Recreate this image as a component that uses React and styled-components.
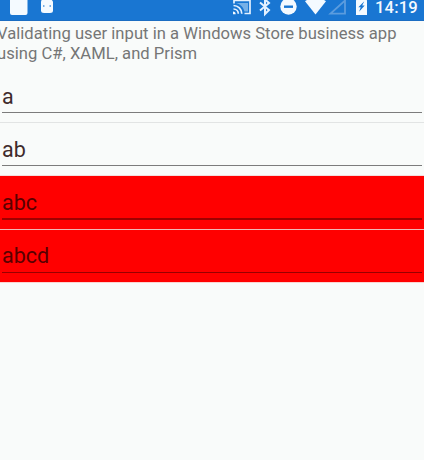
import React from 'react';
import styled, { createGlobalStyle } from 'styled-components';

const GlobalStyle = createGlobalStyle`
  * { box-sizing: border-box; }
  html, body { margin: 0; padding: 0; overflow: hidden; background: #f9fbfa; }
`;

const Screen = styled.main`
  width: 424px;
  height: 460px;
  overflow: hidden;
  background: #f9fbfa;
  font-family: Roboto, sans-serif;
`;

const StatusBar = styled.header`
  display: flex;
  height: 21px;
  background: #1976d2;
  border-bottom: 1px solid #1b6dc2;
`;

const StatusIcons = styled.svg`
  display: block;
  flex: none;
  width: 374px;
  height: 20px;
`;

const Clock = styled.time`
  margin-left: 1px;
  font-size: 16.6px;
  font-weight: 500;
  line-height: 15px;
  letter-spacing: 0.15px;
  color: #f4f9ff;
`;

const Description = styled.p`
  margin: 0 0 0 -3px;
  padding-top: 3px;
  height: 49px;
  font-size: 16.6px;
  line-height: 19.5px;
  letter-spacing: 0.02px;
  color: #757676;
  white-space: pre-line;
`;

const List = styled.section`
  display: flex;
  flex-direction: column;
`;

const Row = styled.label`
  display: block;
  height: ${({ $height }) => $height}px;
  padding: ${({ $top }) => $top}px 2px 0;
  background: ${({ $invalid }) => ($invalid ? '#ff0000' : 'transparent')};
  border-bottom: 1px solid ${({ $divider }) => $divider};
`;

const Entry = styled.input`
  display: block;
  width: 100%;
  height: ${({ $line, $gap }) => 25 + $gap + $line}px;
  padding: 0 0 ${({ $gap }) => $gap}px;
  border: 0;
  border-bottom: ${({ $line }) => $line}px solid ${({ $lineColor }) => $lineColor};
  border-radius: 0;
  outline: 0;
  background: transparent;
  font: 400 21.5px/25px Roboto, sans-serif;
  color: ${({ $invalid }) => ($invalid ? '#580000' : '#402b2c')};
`;

const entries = [
  { text: 'a', invalid: false, divider: '#e2e4e4', height: 53, top: 14, gap: 3, line: 1, lineColor: '#7c7c7c' },
  { text: 'ab', invalid: false, divider: '#f4dddd', height: 53, top: 14, gap: 3, line: 1, lineColor: '#7c7c7c' },
  { text: 'abc', invalid: true, divider: '#f0b8b4', height: 54, top: 14, gap: 3, line: 2, lineColor: '#a00000' },
  { text: 'abcd', invalid: true, divider: '#fbd4d1', height: 53, top: 13, gap: 4, line: 1, lineColor: '#980000' },
];

function StatusSymbols() {
  return (
    <StatusIcons viewBox="0 0 374 20" aria-hidden="true">
      <g fill="#f4faff">
        <rect x="10" y="-4" width="17.5" height="19" rx="2" />
        <path d="M42-1h9l2 2.5v9q0 2.5-3 2.5h-6q-3 0-3-2.5v-9Z" />
        <circle cx="288.5" cy="6.5" r="8.2" />
        <path d="M305 1.3Q315.5-6 326 1.3L315.5 14.5Z" />
        <path d="M358-1h7q2 0 2 2v14h-11V1q0-2 2-2Z" />
      </g>
      <g fill="#1976d2">
        <circle cx="43.8" cy="6" r="0.8" />
        <circle cx="50.2" cy="6" r="0.8" />
        <rect x="284" y="5.5" width="9" height="2.4" />
        <path d="m364.3 1.3-6 6h2.4l-1.6 4.5 5.6-6.3h-2.5Z" />
      </g>
      <g fill="none" stroke="#e4f1ff" strokeWidth="1.7">
        <path d="M234 3.5V.5h16v13h-5.5" />
        <path d="M233.5 5.5a8.3 8.3 0 0 1 8.3 8.3M233.5 9a4.8 4.8 0 0 1 4.8 4.8" />
        <path d="m260 2.5 9 7.5-4 4V-.5l4 3.5-9 7.5" strokeWidth="2" />
      </g>
      <path d="M233 11.5a2.7 2.7 0 0 1 2.7 2.7H233Z" fill="#f4faff" />
      <path d="M236 3h12v8.5h-3.5C243.5 7 240 4 236 3Z" fill="#a9d0f2" opacity=".65" />
      <path d="M345 .5v13.2h-14.5Z" fill="none" stroke="#5b9cde" strokeWidth="1.8" />
    </StatusIcons>
  );
}

export default function App() {
  return (
    <>
      <GlobalStyle />
      <Screen>
        <StatusBar>
          <StatusSymbols />
          <Clock>14:19</Clock>
        </StatusBar>
        <Description>
          {'Validating user input in a Windows Store business app\nusing C#, XAML, and Prism'}
        </Description>
        <List>
          {entries.map(({ text, invalid, divider, height, top, gap, line, lineColor }) => (
            <Row key={text} $invalid={invalid} $divider={divider} $height={height} $top={top}>
              <Entry
                defaultValue={text}
                $invalid={invalid}
                $gap={gap}
                $line={line}
                $lineColor={lineColor}
                spellCheck={false}
              />
            </Row>
          ))}
        </List>
      </Screen>
    </>
  );
}
